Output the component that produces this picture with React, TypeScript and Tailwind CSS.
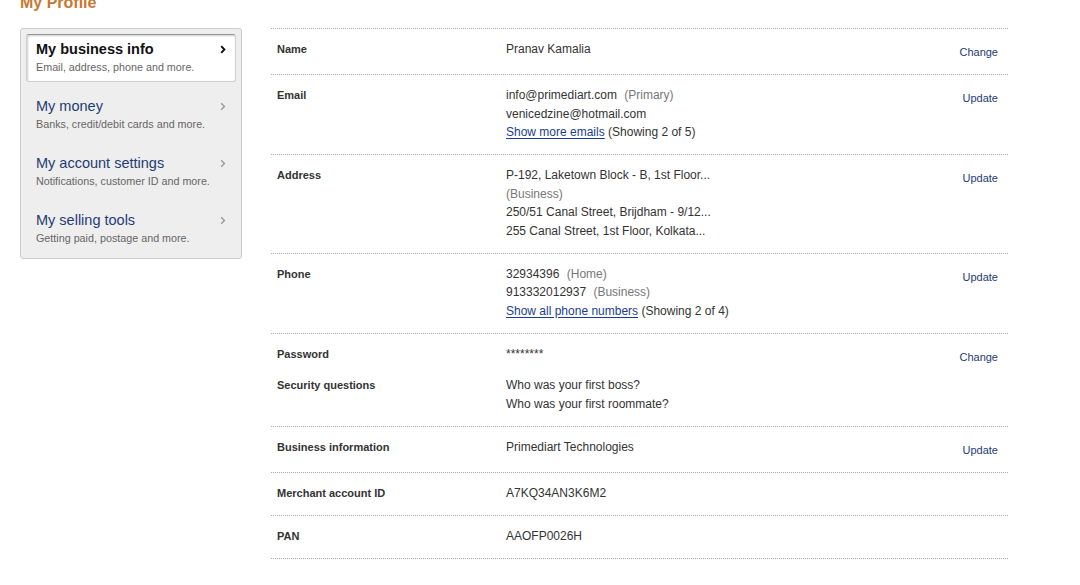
import type { ReactNode } from 'react';

const font = { fontFamily: '"Liberation Sans", Arial, Helvetica, sans-serif' };

function Chevron({ active }: { active?: boolean }) {
  return (
    <svg width="6" height="9" viewBox="0 0 6 9" className="shrink-0">
      <path
        d="M1.2 1.2 L4.4 4.5 L1.2 7.8"
        fill="none"
        stroke={active ? '#111' : '#999'}
        strokeWidth={active ? 1.9 : 1.4}
      />
    </svg>
  );
}

const navItems = [
  { title: 'My business info', sub: 'Email, address, phone and more.', active: true },
  { title: 'My money', sub: 'Banks, credit/debit cards and more.' },
  { title: 'My account settings', sub: 'Notifications, customer ID and more.' },
  { title: 'My selling tools', sub: 'Getting paid, postage and more.' },
];

function Gray({ children }: { children: ReactNode }) {
  return <span className="text-[#777] ml-[4px]">{children}</span>;
}

function Link({ children }: { children: ReactNode }) {
  return <a className="text-[#1a3d8f] underline underline-offset-[2px] cursor-pointer">{children}</a>;
}

function Action({ label }: { label?: string }) {
  return (
    <div className="pt-[3px] text-right text-[11px] text-[#1f3a73] cursor-pointer">{label}</div>
  );
}

function Row({ label, action, children }: { label: string; action?: string; children: ReactNode }) {
  return (
    <div className="grid grid-cols-[229px_1fr_120px] border-b border-dotted border-[#aaa] pt-[11px] pb-[12.5px] pl-[6px] pr-[10px] leading-[18.5px]">
      <div className="text-[11px] font-bold text-[#333]">{label}</div>
      <div className="text-[12px] text-[#333]">{children}</div>
      <Action label={action} />
    </div>
  );
}

export default function App() {
  return (
    <div style={font} className="bg-white min-h-[585px] w-[1080px] overflow-hidden pl-[20px]">
      <h1 className="-mt-[7px] h-[35px] text-[16px] leading-[20px] font-bold text-[#c8782f]">My Profile</h1>

      <div className="flex items-start gap-[29px]">
        {/* Sidebar */}
        <div className="w-[222px] rounded-[3px] border border-[#cdcdcd] bg-[#eeeeee] p-[5px] flex flex-col gap-[9px]">
          {navItems.map((item) => (
            <div
              key={item.title}
              className={
                item.active
                  ? 'h-[48px] rounded-[3px] bg-white border border-[#cfcfcf] border-t-[#999] shadow-[inset_1px_1px_2px_rgba(0,0,0,0.2)] pl-[9px] pr-[9px] pt-[5px]'
                  : 'h-[48px] pl-[10px] pr-[10px] pt-[6px]'
              }
            >
              <div className="flex items-center justify-between">
                <span
                  className={
                    item.active
                      ? 'text-[14.5px] leading-[18px] font-bold text-[#111]'
                      : 'text-[14.5px] leading-[18px] text-[#1f3c74]'
                  }
                >
                  {item.title}
                </span>
                <Chevron active={item.active} />
              </div>
              <div className="mt-[2px] text-[10.75px] leading-[14px] text-[#666]">{item.sub}</div>
            </div>
          ))}
        </div>

        {/* Details */}
        <div className="w-[737px] border-t border-dotted border-[#aaa]">
          <Row label="Name" action="Change">
            Pranav Kamalia
          </Row>
          <Row label="Email" action="Update">
            <div>
              info@primediart.com <Gray>(Primary)</Gray>
            </div>
            <div>venicedzine@hotmail.com</div>
            <div>
              <Link>Show more emails</Link> (Showing 2 of 5)
            </div>
          </Row>
          <Row label="Address" action="Update">
            <div>P-192, Laketown Block - B, 1st Floor...</div>
            <div className="text-[#777]">(Business)</div>
            <div>250/51 Canal Street, Brijdham - 9/12...</div>
            <div>255 Canal Street, 1st Floor, Kolkata...</div>
          </Row>
          <Row label="Phone" action="Update">
            <div>
              32934396 <Gray>(Home)</Gray>
            </div>
            <div>
              913332012937 <Gray>(Business)</Gray>
            </div>
            <div>
              <Link>Show all phone numbers</Link> (Showing 2 of 4)
            </div>
          </Row>

          {/* Password + security questions */}
          <div className="border-b border-dotted border-[#aaa] pt-[11px] pb-[12.5px] pl-[6px] pr-[10px] leading-[18.5px] flex flex-col gap-[10px]">
            <div className="grid grid-cols-[229px_1fr_120px]">
              <div className="text-[11px] font-bold text-[#333]">Password</div>
              <div className="text-[12px] text-[#333]">********</div>
              <Action label="Change" />
            </div>
            <div className="grid grid-cols-[229px_1fr_120px]">
              <div className="text-[11px] font-bold text-[#333]">Security questions</div>
              <div className="text-[12px] text-[#333]">
                <div>Who was your first boss?</div>
                <div>Who was your first roommate?</div>
              </div>
              <div />
            </div>
          </div>

          <Row label="Business information" action="Update">
            Primediart Technologies
          </Row>
          <Row label="Merchant account ID">A7KQ34AN3K6M2</Row>
          <Row label="PAN">AAOFP0026H</Row>
        </div>
      </div>
    </div>
  );
}
